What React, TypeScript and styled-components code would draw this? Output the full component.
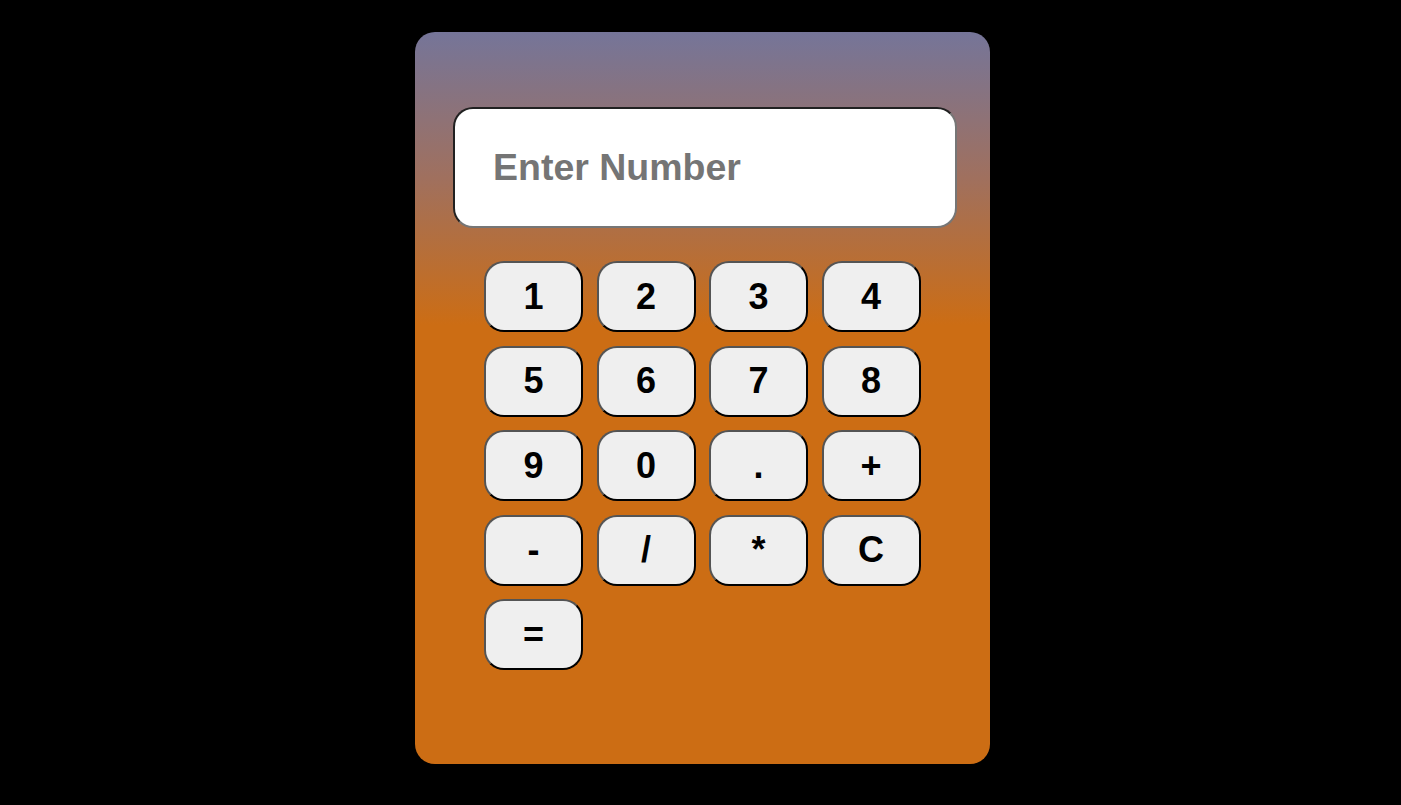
import React from "react";
import styled, { createGlobalStyle } from "styled-components";

const Global = createGlobalStyle`
  html, body { margin: 0; padding: 0; background: #000; }
  body { font-family: "Liberation Sans", Arial, sans-serif; }
`;

const Page = styled.div`
  min-height: 805px;
  display: flex;
  justify-content: center;
  align-items: flex-start;
  padding: 32px 0 0 4px;
  box-sizing: border-box;
`;

const Card = styled.div`
  width: 575px;
  height: 732px;
  box-sizing: border-box;
  border-radius: 20px;
  background: linear-gradient(to bottom, #757599 0%, #a0705e 20%, #cc6d14 40%, #cc6d14 100%);
  padding: 75px 33px 0 38px;
`;

const Display = styled.input`
  display: block;
  width: 504px;
  height: 121px;
  box-sizing: border-box;
  border: 2px inset rgb(118, 118, 118);
  border-radius: 20px;
  background: #fff;
  padding: 0 0 0 38px;
  font-family: "Liberation Sans", Arial, sans-serif;
  font-weight: bold;
  font-size: 37.5px;
  color: #000;
  outline: none;
  &::placeholder { color: #757575; }
`;

const Keys = styled.div`
  display: grid;
  grid-template-columns: repeat(4, 99px);
  grid-auto-rows: 71px;
  gap: 13.5px 13.5px;
  margin: 33px 0 0 31px;
`;

const Key = styled.button`
  box-sizing: border-box;
  border: 2px outset #000;
  border-radius: 20px;
  background: #efefef;
  color: #000;
  font-family: "Liberation Sans", Arial, sans-serif;
  font-weight: bold;
  font-size: 36px;
  padding: 0;
  cursor: pointer;
`;

const keys = ["1", "2", "3", "4", "5", "6", "7", "8", "9", "0", ".", "+", "-", "/", "*", "C", "="];

export default function App() {
  const [value, setValue] = React.useState("");
  const press = (k: string) => {
    if (k === "C") return setValue("");
    if (k === "=") {
      try {
        // eslint-disable-next-line no-new-func
        setValue(String(Function(`return (${value})`)()));
      } catch {
        setValue("Error");
      }
      return;
    }
    setValue((v) => v + k);
  };
  return (
    <>
      <Global />
      <Page>
        <Card>
          <Display
            placeholder="Enter Number"
            value={value}
            onChange={(e) => setValue(e.target.value)}
          />
          <Keys>
            {keys.map((k) => (
              <Key key={k} onClick={() => press(k)}>
                {k}
              </Key>
            ))}
          </Keys>
        </Card>
      </Page>
    </>
  );
}
